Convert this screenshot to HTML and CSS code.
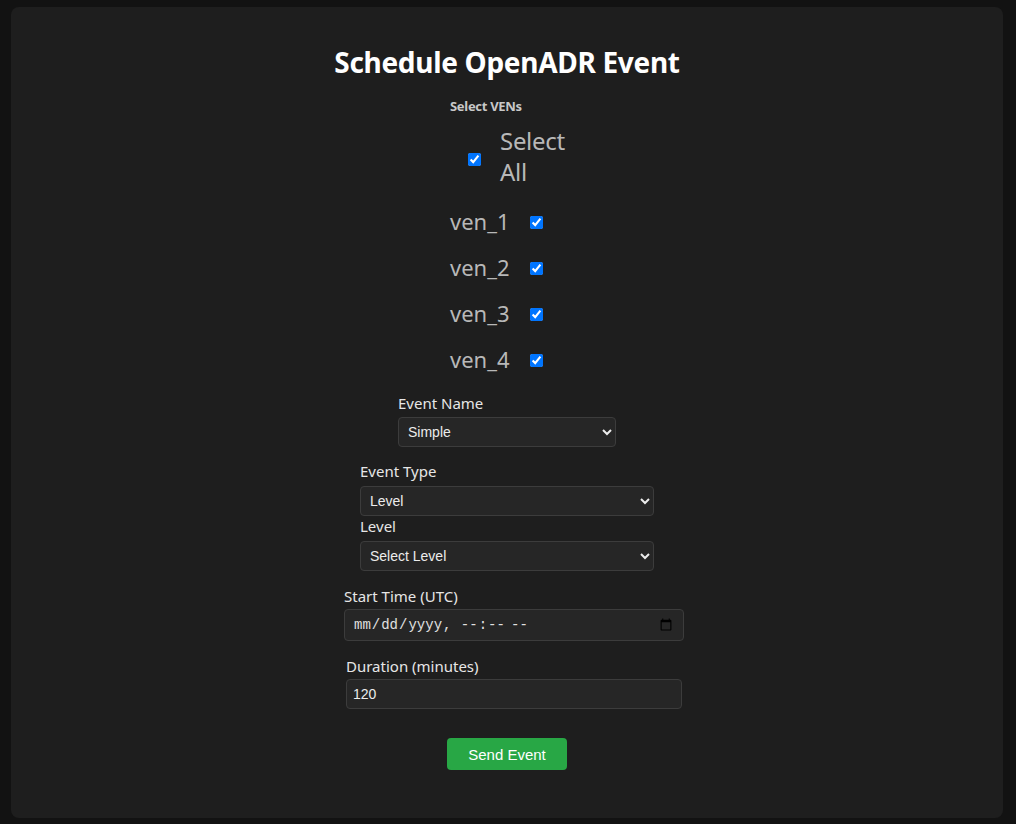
FILE: index.html
```html
<!DOCTYPE html>
<html lang="en">
<head>
<meta charset="utf-8">
<title>Schedule OpenADR Event</title>
<link rel="stylesheet" href="styles.css">
</head>
<body>
<div class="card">
  <h1 class="title">Schedule OpenADR Event</h1>
  <form class="form">
    <div class="vens">
      <div class="vens-label">Select VENs</div>
      <label class="select-all"><input type="checkbox" class="check check-all" checked><span class="select-all-text">Select All</span></label>
      <label class="ven"><span class="ven-name">ven_1</span><input type="checkbox" class="check" checked></label>
      <label class="ven"><span class="ven-name">ven_2</span><input type="checkbox" class="check" checked></label>
      <label class="ven"><span class="ven-name">ven_3</span><input type="checkbox" class="check" checked></label>
      <label class="ven"><span class="ven-name">ven_4</span><input type="checkbox" class="check" checked></label>
    </div>

    <div class="field field-name">
      <label class="field-label">Event Name</label>
      <select class="control select">
        <option>Simple</option>
      </select>
    </div>

    <div class="field field-type">
      <label class="field-label">Event Type</label>
      <select class="control select">
        <option>Level</option>
      </select>
      <label class="field-label">Level</label>
      <select class="control select">
        <option>Select Level</option>
      </select>
    </div>

    <div class="field field-start">
      <label class="field-label">Start Time (UTC)</label>
      <input type="datetime-local" class="control input input-date">
    </div>

    <div class="field field-duration">
      <label class="field-label">Duration (minutes)</label>
      <input type="number" class="control input input-num" value="120">
    </div>

    <button type="button" class="send">Send Event</button>
  </form>
</div>
</body>
</html>
```

FILE: styles.css
```css
html, body {
  margin: 0;
  padding: 0;
}

body {
  background: #121212;
  padding: 7px 13px 6px 11px;
  font-family: "Noto Sans", "Open Sans", sans-serif;
  color: #e6e6e6;
}

.card {
  background: #1e1e1e;
  border-radius: 8px;
  height: 811px;
  box-sizing: border-box;
  padding-top: 37px;
  display: flex;
  flex-direction: column;
  align-items: center;
}

.title {
  margin: 0;
  font-size: 28px;
  line-height: 36px;
  font-weight: 700;
  letter-spacing: -0.3px;
  color: #ffffff;
}

.form {
  display: flex;
  flex-direction: column;
  align-items: center;
}

.vens {
  margin-top: 18px;
  width: 114px;
  display: flex;
  flex-direction: column;
}

.vens-label {
  font-size: 13px;
  line-height: 16px;
  font-weight: 700;
  letter-spacing: -0.3px;
  color: #c8c8c8;
}

.check {
  width: 13px;
  height: 13px;
  margin: 0;
  flex: none;
}

.select-all {
  margin-top: 11px;
  display: flex;
  align-items: center;
}

.check-all {
  margin-left: 18px;
  margin-top: 6px;
}

.select-all-text {
  margin-left: 19px;
  width: 70px;
  font-size: 24px;
  line-height: 31px;
  letter-spacing: -0.3px;
  color: #b8b8b8;
}

.ven {
  display: flex;
  align-items: center;
  height: 30px;
  margin-top: 16px;
}

.select-all + .ven {
  margin-top: 19px;
}

.ven-name {
  width: 80px;
  font-size: 22px;
  line-height: 30px;
  color: #b8b8b8;
}

.ven .check {
  margin-top: 2px;
}

.field {
  display: flex;
  flex-direction: column;
}

.field-label {
  font-size: 15px;
  line-height: 20px;
  color: #e6e6e6;
}

.field-name {
  margin-top: 19px;
  width: 218px;
}

.field-name .field-label {
  margin-bottom: 4px;
}

.field-type {
  margin-top: 14px;
  width: 294px;
}

.field-type .select {
  margin-top: 5px;
}

.field-start {
  margin-top: 15px;
  width: 340px;
  margin-left: 14px;
}

.field-duration {
  margin-top: 15px;
  width: 336px;
  margin-left: 14px;
}

.field-start .input,
.field-duration .input {
  margin-top: 3px;
}

.control {
  box-sizing: border-box;
  width: 100%;
  margin: 0;
  background: #262626;
  border: 1px solid #3c3c3c;
  border-radius: 4px;
  color: #ececec;
  font-family: "Liberation Sans", Arial, sans-serif;
  font-size: 14px;
}

.select {
  height: 30px;
  padding: 0 12px 0 5px;
}

.input {
  padding: 0 6px;
}

.input-date {
  height: 32px;
  padding: 0 8px;
  font-family: "Liberation Mono", monospace;
  font-size: 14px;
  color: #e0e0e0;
}

.input-num {
  height: 30px;
}

.send {
  margin-top: 29px;
  height: 32px;
  width: 120px;
  padding: 0;
  border: none;
  border-radius: 4px;
  background: #28a745;
  color: #ffffff;
  font-family: "Liberation Sans", Arial, sans-serif;
  font-size: 15px;
}
```
